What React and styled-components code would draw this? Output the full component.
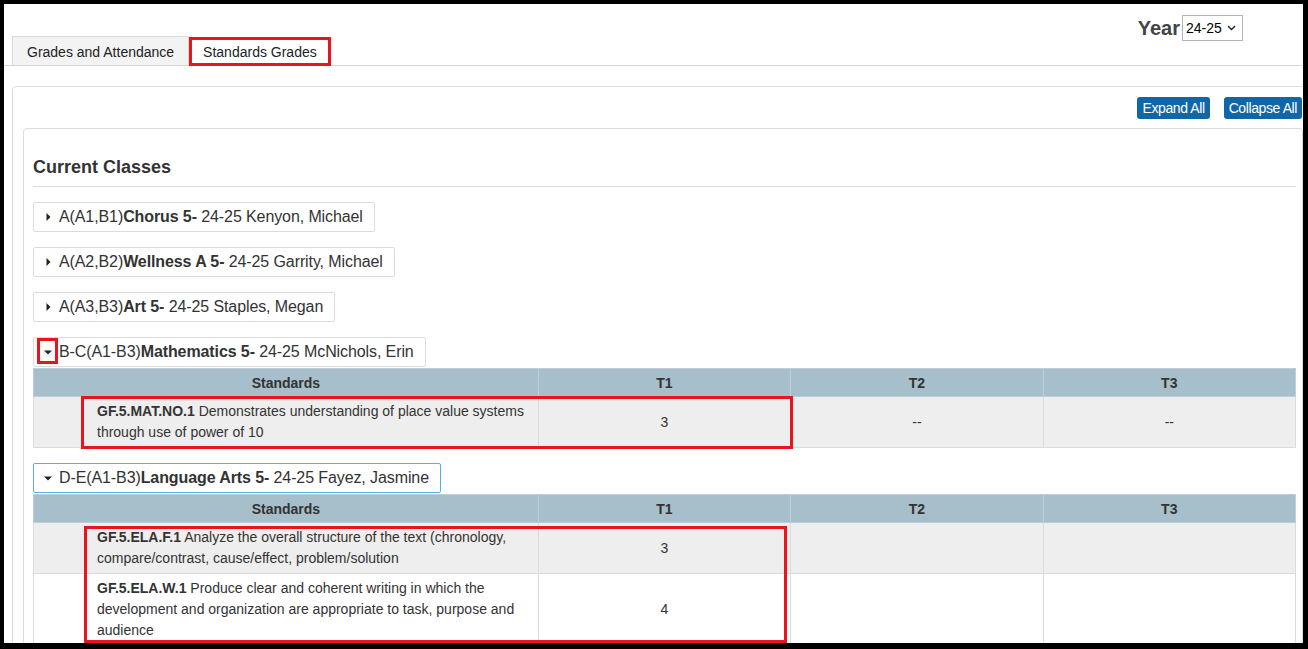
import React from "react";
import styled, { createGlobalStyle, css } from "styled-components";

const GlobalStyle = createGlobalStyle`
  html, body {
    margin: 0;
    padding: 0;
    background: #fff;
  }
  body {
    font-family: "Liberation Sans", Arial, sans-serif;
    color: #333;
  }
`;

const Frame = styled.div`
  width: 1308px;
  height: 649px;
  box-sizing: border-box;
  border-style: solid;
  border-color: #000;
  border-width: 4px 5px 6px 4px;
  overflow: hidden;
  background: #fff;
`;

const TabBar = styled.div`
  display: flex;
  align-items: flex-end;
  justify-content: space-between;
  padding: 11px 0 0 8px;
  border-bottom: 1px solid #d6d6d6;
`;

const Tabs = styled.div`
  display: flex;
  align-items: flex-end;
`;

const Tab = styled.div`
  height: 29px;
  box-sizing: border-box;
  display: flex;
  align-items: center;
  padding: 1px 14px 0;
  font-size: 14px;
  color: #222;
  background: #f3f3f3;
  border: 1px solid #dcdcdc;
  border-bottom: none;

  ${(p) =>
    p.$active &&
    css`
      background: #fff;
      border: 3px solid #e8151f;
      padding: 0 11px;
      margin-bottom: -1px;
      position: relative;
    `}
`;

const YearBlock = styled.div`
  display: flex;
  align-items: center;
  margin: 0 60px 24px 0;
`;

const YearLabel = styled.span`
  font-size: 20px;
  font-weight: bold;
  color: #444;
`;

const YearSelect = styled.div`
  display: flex;
  align-items: center;
  justify-content: space-between;
  width: 61px;
  height: 26px;
  box-sizing: border-box;
  margin-left: 2px;
  border: 1px solid #b5b5b5;
  padding: 0 6px 0 3px;
  font-size: 14px;
  color: #000;
`;

const Panel = styled.div`
  margin: 20px 0 0 8px;
  width: 1310px;
  box-sizing: border-box;
  border: 1px solid #dcdcdc;
  border-radius: 4px;
  padding: 10px 19px 0 10px;
`;

const Toolbar = styled.div`
  display: flex;
  justify-content: flex-end;
  gap: 14px;
`;

const ActionButton = styled.div`
  height: 22px;
  line-height: 22px;
  padding: 0 5px;
  background: #1166a8;
  color: #fff;
  border-radius: 3px;
  font-size: 14px;
  letter-spacing: -0.4px;
  white-space: nowrap;
`;

const InnerPanel = styled.div`
  margin-top: 9px;
  width: 1280px;
  box-sizing: border-box;
  border: 1px solid #dcdcdc;
  border-radius: 4px;
  padding: 28px 6px 0 9px;
`;

const SectionTitle = styled.h3`
  margin: 0 0 15px;
  font-size: 18px;
  line-height: 20px;
  font-weight: bold;
  color: #333;
  padding-bottom: 9px;
  border-bottom: 1px solid #dcdcdc;
`;

const ClassList = styled.div`
  display: flex;
  flex-direction: column;
  align-items: flex-start;
`;

const ClassToggle = styled.div`
  display: inline-flex;
  align-items: center;
  height: 30px;
  box-sizing: border-box;
  border: 1px solid ${(p) => (p.$focused ? "#5aaee0" : "#dcdcdc")};
  border-radius: 2px;
  padding: 0 11px 0 8px;
  font-size: 16px;
  color: #333;
  background: #fff;
  white-space: nowrap;
  margin-bottom: ${(p) => (p.$expanded ? "1px" : "15px")};
`;

const ClassLabel = styled.span`
  letter-spacing: -0.1px;
`;

const Caret = styled.span`
  position: relative;
  width: 12px;
  height: 28px;
  margin-right: 5px;
  display: flex;
  align-items: center;
  justify-content: center;

  ${(p) =>
    p.$marked &&
    css`
      &::after {
        content: "";
        position: absolute;
        left: -5px;
        top: 0;
        width: 21px;
        height: 26px;
        box-sizing: border-box;
        border: 3px solid #e8151f;
      }
    `}
`;

const TableWrap = styled.div`
  position: relative;
  width: 100%;
  margin-bottom: 15px;
`;

const Table = styled.table`
  width: 100%;
  border-collapse: collapse;
  table-layout: fixed;
  font-size: 14px;
  color: #333;
`;

const Th = styled.th`
  height: 27px;
  padding: 0;
  background: #a6bfcb;
  border: 1px solid #bccfd8;
  font-weight: bold;
  text-align: center;
`;

const Tr = styled.tr`
  background: ${(p) => (p.$shade ? "#eeeeee" : "#fff")};
`;

const Td = styled.td`
  border: 1px solid #dcdcdc;
  padding: 4px;
  line-height: 21px;
  text-align: center;
  vertical-align: middle;
`;

const StandardTd = styled(Td)`
  text-align: left;
  padding: 4px 12px 4px 63px;
`;

const Mark = styled.div`
  position: absolute;
  left: ${(p) => p.$left}px;
  top: ${(p) => p.$top}px;
  width: ${(p) => p.$w}px;
  height: ${(p) => p.$h}px;
  box-sizing: border-box;
  border: 3px solid #e8151f;
  pointer-events: none;
`;

function CaretIcon({ open }) {
  return open ? (
    <svg width="8" height="5" viewBox="0 0 8 5">
      <path d="M0 0.5 L8 0.5 L4 4.5 Z" fill="#222" />
    </svg>
  ) : (
    <svg width="5" height="8" viewBox="0 0 5 8">
      <path d="M0.5 0 L4.5 4 L0.5 8 Z" fill="#222" />
    </svg>
  );
}

function Chevron() {
  return (
    <svg width="9" height="6" viewBox="0 0 9 6">
      <path d="M1 1 L4.5 4.5 L8 1" fill="none" stroke="#222" strokeWidth="1.4" />
    </svg>
  );
}

const classes = [
  { prefix: "A(A1,B1)", name: "Chorus 5-", rest: " 24-25 Kenyon, Michael" },
  { prefix: "A(A2,B2)", name: "Wellness A 5-", rest: " 24-25 Garrity, Michael" },
  { prefix: "A(A3,B3)", name: "Art 5-", rest: " 24-25 Staples, Megan" },
  {
    prefix: "B-C(A1-B3)",
    name: "Mathematics 5-",
    rest: " 24-25 McNichols, Erin",
    open: true,
    markedCaret: true,
    mark: { left: 48, top: 28, w: 712, h: 53 },
    rows: [
      {
        code: "GF.5.MAT.NO.1",
        text: " Demonstrates understanding of place value systems through use of power of 10",
        t: ["3", "--", "--"],
      },
    ],
  },
  {
    prefix: "D-E(A1-B3)",
    name: "Language Arts 5-",
    rest: " 24-25 Fayez, Jasmine",
    open: true,
    focused: true,
    mark: { left: 51, top: 32, w: 703, h: 117 },
    rows: [
      {
        code: "GF.5.ELA.F.1",
        text: " Analyze the overall structure of the text (chronology, compare/contrast, cause/effect, problem/solution",
        t: ["3", "", ""],
      },
      {
        code: "GF.5.ELA.W.1",
        text: " Produce clear and coherent writing in which the development and organization are appropriate to task, purpose and audience",
        t: ["4", "", ""],
      },
    ],
  },
];

function StandardsTable({ rows, mark }) {
  return (
    <TableWrap>
      <Table>
        <colgroup>
          <col style={{ width: "40%" }} />
          <col style={{ width: "20%" }} />
          <col style={{ width: "20%" }} />
          <col style={{ width: "20%" }} />
        </colgroup>
        <thead>
          <tr>
            <Th>Standards</Th>
            <Th>T1</Th>
            <Th>T2</Th>
            <Th>T3</Th>
          </tr>
        </thead>
        <tbody>
          {rows.map((r, i) => (
            <Tr key={r.code} $shade={i % 2 === 0}>
              <StandardTd>
                <b>{r.code}</b>
                {r.text}
              </StandardTd>
              {r.t.map((v, j) => (
                <Td key={j}>{v}</Td>
              ))}
            </Tr>
          ))}
        </tbody>
      </Table>
      {mark && <Mark $left={mark.left} $top={mark.top} $w={mark.w} $h={mark.h} />}
    </TableWrap>
  );
}

export default function App() {
  return (
    <>
      <GlobalStyle />
      <Frame>
        <TabBar>
          <Tabs>
            <Tab>Grades and Attendance</Tab>
            <Tab $active>Standards Grades</Tab>
          </Tabs>
          <YearBlock>
            <YearLabel>Year</YearLabel>
            <YearSelect>
              <span>24-25</span>
              <Chevron />
            </YearSelect>
          </YearBlock>
        </TabBar>

        <Panel>
          <Toolbar>
            <ActionButton>Expand All</ActionButton>
            <ActionButton>Collapse All</ActionButton>
          </Toolbar>

          <InnerPanel>
            <SectionTitle>Current Classes</SectionTitle>
            <ClassList>
              {classes.map((c) => (
                <React.Fragment key={c.prefix + c.name}>
                  <ClassToggle $expanded={c.open} $focused={c.focused}>
                    <Caret $marked={c.markedCaret}>
                      <CaretIcon open={c.open} />
                    </Caret>
                    <ClassLabel>
                      {c.prefix}
                      <b>{c.name}</b>
                      {c.rest}
                    </ClassLabel>
                  </ClassToggle>
                  {c.open && <StandardsTable rows={c.rows} mark={c.mark} />}
                </React.Fragment>
              ))}
            </ClassList>
          </InnerPanel>
        </Panel>
      </Frame>
    </>
  );
}
